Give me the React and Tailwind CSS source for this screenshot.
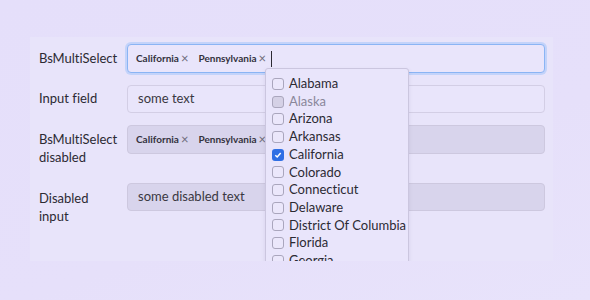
import { useState } from "react"

const states = [
  "Alabama",
  "Alaska",
  "Arizona",
  "Arkansas",
  "California",
  "Colorado",
  "Connecticut",
  "Delaware",
  "District Of Columbia",
  "Florida",
  "Georgia",
]

const Tag = ({ label }) => (
  <span className="flex items-center gap-[2px] text-[10px] font-bold text-[#34323d]">
    {label}
    <span className="text-[13px] font-normal text-[#6e6b7a] leading-none">×</span>
  </span>
)

const CheckItem = ({ name }) => {
  const checked = name === "California"
  const disabled = name === "Alaska"
  return (
    <div className="flex h-[17.7px] items-center gap-[5px] whitespace-nowrap">
      {checked ? (
        <span className="flex h-[12px] w-[12px] shrink-0 items-center justify-center rounded-[3px] bg-[#2f6fe4]">
          <svg width="8" height="8" viewBox="0 0 8 8">
            <path d="M1.3 4.2 L3.2 6 L6.7 2" stroke="white" strokeWidth="1.5" fill="none" />
          </svg>
        </span>
      ) : (
        <span
          className={
            "h-[12px] w-[12px] shrink-0 rounded-[3px] border border-[#aaa6bd] " +
            (disabled ? "bg-[#d5d1e6]" : "bg-[#ebe7fb]")
          }
        />
      )}
      <span className={disabled ? "text-[#8a879a]" : "text-[#2c2a33]"}>{name}</span>
    </div>
  )
}

export default function App() {
  const [text] = useState("some text")
  return (
    <div
      className="h-[300px] w-[590px] overflow-hidden bg-[linear-gradient(160deg,#e5dffa_0%,#e6e0fa_60%,#e8e3fb_100%)] pt-[37px] pl-[30px] text-[13px] text-[#2c2a33] [font-variant-ligatures:none]"
      style={{ fontFamily: "Lato, 'Noto Sans', sans-serif" }}
    >
      <div className="relative h-[224px] w-[523px] overflow-hidden bg-[#e8e4fa] pt-[7px] pl-[9px]">
        <div className="flex items-center">
          <div className="w-[88px] whitespace-nowrap">BsMultiSelect</div>
          <div className="flex h-[29px] w-[418px] items-center gap-[10px] rounded-[4px] border border-[#8ab4f4] bg-[#e9e5fb] pl-[8px] shadow-[0_0_0_2px_#c3d3fa]">
            <Tag label="California" />
            <Tag label="Pennsylvania" />
            <span className="-ml-[5px] h-[16px] w-px bg-[#2c2a33]" />
          </div>
        </div>

        <div className="mt-[12px] flex items-center">
          <div className="w-[88px]">Input field</div>
          <div className="flex h-[28px] w-[418px] items-center rounded-[4px] border border-[#d3cee5] bg-[#e9e5fb] pl-[10px] text-[#3a3842]">
            {text}
          </div>
        </div>

        <div className="mt-[12px] flex items-start">
          <div className="w-[88px] whitespace-nowrap pt-[5px] leading-[18px]">
            BsMultiSelect
            <br />
            disabled
          </div>
          <div className="flex h-[29px] w-[418px] items-center gap-[10px] rounded-[4px] border border-[#cdc8df] bg-[#d8d4ec] pl-[8px]">
            <Tag label="California" />
            <Tag label="Pennsylvania" />
          </div>
        </div>

        <div className="mt-[17px] flex items-start">
          <div className="w-[88px] pt-[6px] leading-[18px]">
            Disabled
            <br />
            input
          </div>
          <div className="flex h-[28px] w-[418px] items-center rounded-[4px] border border-[#cdc8df] bg-[#d8d4ec] pl-[10px] text-[#3a3842]">
            some disabled text
          </div>
        </div>

        <div className="absolute left-[235px] top-[31px] w-[144px] rounded-[3px] border border-[#cbc6df] bg-[#e9e5fb] pt-[6px] pl-[6px] shadow-[0_2px_4px_rgba(80,70,120,0.12)]">
          {states.map((s) => (
            <CheckItem key={s} name={s} />
          ))}
        </div>
      </div>
    </div>
  )
}
